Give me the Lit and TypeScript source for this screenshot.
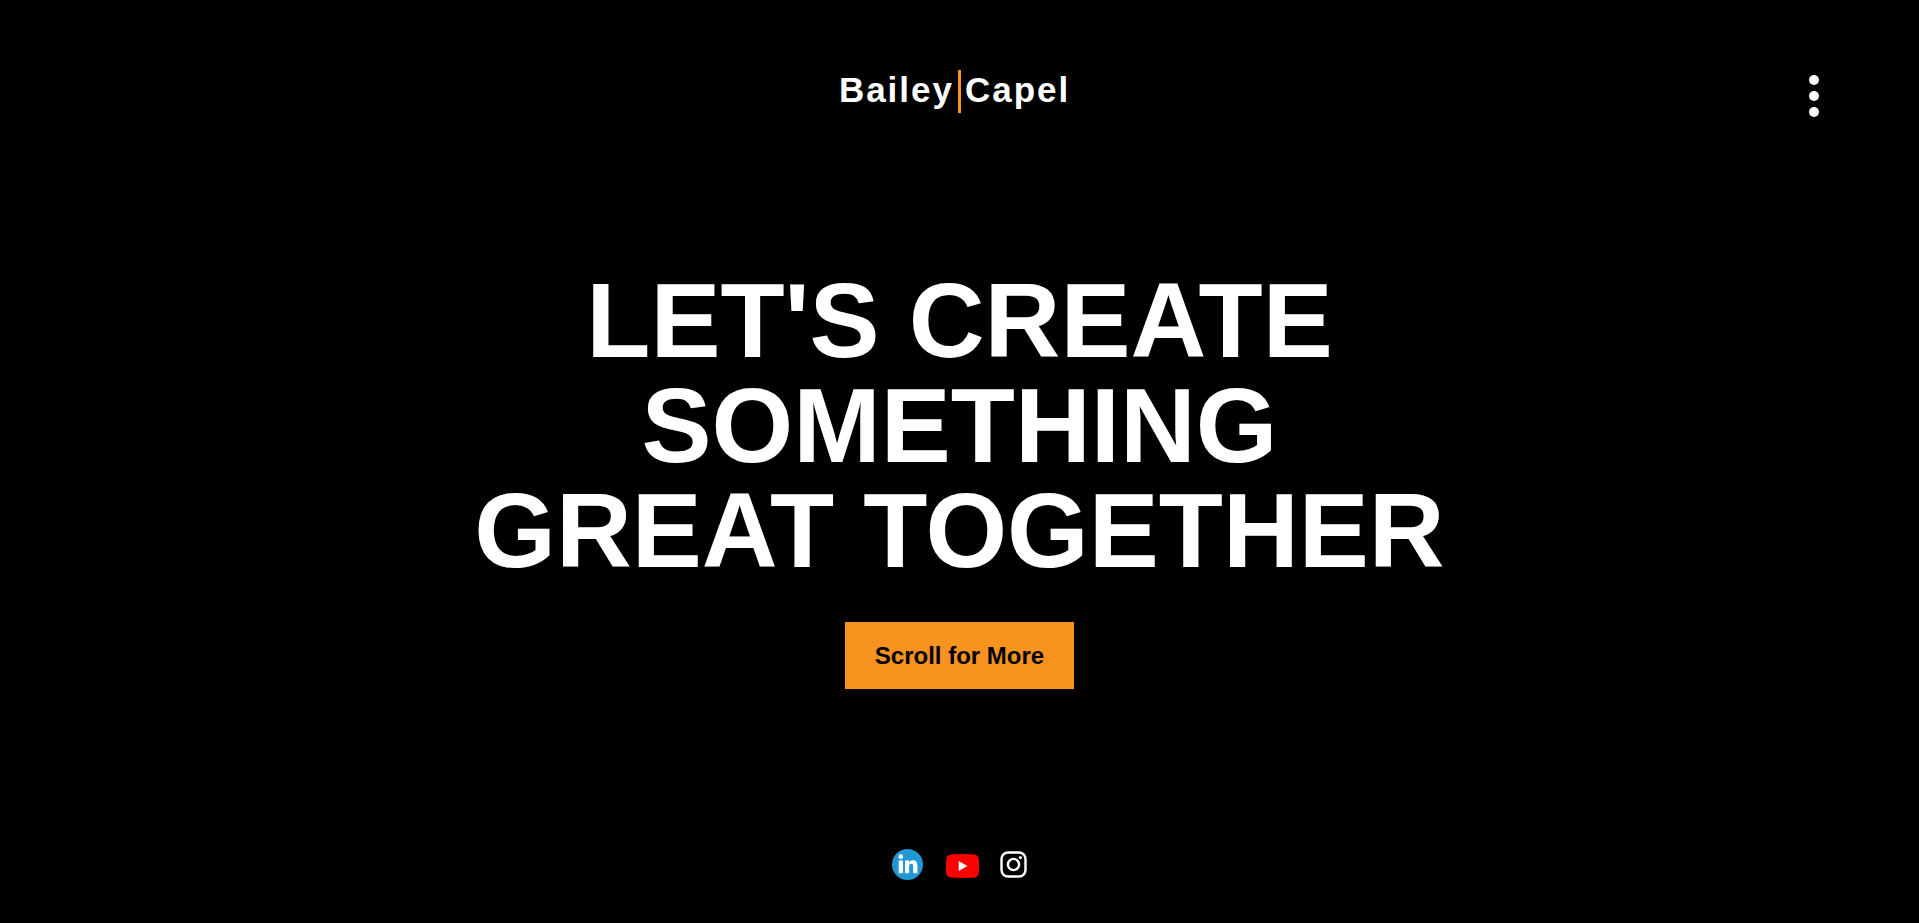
import { LitElement, html, css } from "lit";
import { customElement } from "lit/decorators.js";

@customElement("app-root")
export class AppRoot extends LitElement {
  static styles = css`
    :host {
      display: flex;
      flex-direction: column;
      min-height: 100vh;
      box-sizing: border-box;
      background: #000;
      color: #fff;
      font-family: Arial, "Liberation Sans", sans-serif;
      font-weight: bold;
    }
    a {
      color: inherit;
      text-decoration: none;
    }
    svg {
      display: block;
    }
    .header {
      display: grid;
      grid-template-columns: 1fr auto 1fr;
      align-items: start;
      padding: 70px 100px 0;
    }
    .logo {
      grid-column: 2;
      display: grid;
      grid-template-columns: 1fr 3px 1fr;
      column-gap: 4px;
      font-size: 35px;
      line-height: 40px;
      letter-spacing: 2px;
    }
    .first {
      text-align: right;
    }
    .bar {
      height: 43px;
      background: #f7931e;
    }
    .menu {
      justify-self: end;
      display: grid;
      gap: 6px;
      padding: 5px 0 0;
      border: 0;
      background: none;
      cursor: pointer;
    }
    .dot {
      width: 10px;
      height: 10px;
      border-radius: 50%;
      background: #fff;
    }
    .hero {
      flex: 1;
      display: flex;
      flex-direction: column;
      align-items: center;
      justify-content: center;
      gap: 39px;
    }
    .title {
      margin: 0;
      font-size: 105px;
      line-height: 105px;
      text-align: center;
      text-transform: uppercase;
    }
    .more {
      padding: 20px 30px;
      border: 0;
      background: #f7931e;
      color: #000;
      font: inherit;
      font-size: 24px;
      line-height: 27px;
      cursor: pointer;
    }
    .social {
      display: flex;
      justify-content: center;
      align-items: center;
      gap: 21px;
      padding: 10px 0 43px;
    }
  `;

  render() {
    return html`
      <header class="header">
        <a class="logo" href="#" aria-label="Bailey Capel">
          <span class="first">Bailey</span>
          <span class="bar"></span>
          <span>Capel</span>
        </a>
        <button class="menu" type="button" aria-label="Menu">
          <span class="dot"></span>
          <span class="dot"></span>
          <span class="dot"></span>
        </button>
      </header>
      <main class="hero">
        <h1 class="title">Let's create<br />something<br />great together</h1>
        <button class="more" type="button">Scroll for More</button>
      </main>
      <footer class="social">
        <a href="#" aria-label="LinkedIn">
          <svg width="31" height="31" viewBox="0 0 31 31">
            <circle cx="15.5" cy="15.5" r="15.5" fill="#2298d3" />
            <g fill="#fff">
              <circle cx="8.800" cy="7.700" r="2.400" />
              <path d="M6.700 11.500h4.300v12.700H6.700zM13 11.500h4v1.800c.7-1.200 2-2.100 3.900-2.100 3.700 0 4.500 2.500 4.500 5.700v7.300h-4.200v-6.400c0-1.500 0-3.100-2-3.100s-2.100 1.500-2.100 3v6.500H13z" />
            </g>
          </svg>
        </a>
        <a href="#" aria-label="YouTube">
          <svg width="35" height="28" viewBox="-1 0 35 28">
            <path d="M6 3.400Q17.500 2.600 29 3.400Q33.300 3.700 33.700 8Q34.300 15 33.700 22Q33.300 26.300 29 26.600Q17.500 27.400 6 26.600Q1.700 26.300 1.300 22Q.7 15 1.300 8Q1.700 3.700 6 3.400Z" fill="#f00" />
            <path d="M13.700 10v10l8.700-5z" fill="#fff" />
          </svg>
        </a>
        <a href="#" aria-label="Instagram">
          <svg width="27" height="27" viewBox="0 0 27 27" fill="none" stroke="#fff">
            <rect x="1.500" y="1.500" width="24" height="24" rx="6.500" stroke-width="2.400" />
            <circle cx="13.500" cy="13.500" r="5.600" stroke-width="2.400" />
            <circle cx="20.400" cy="6.600" r="1.600" fill="#fff" stroke="none" />
          </svg>
        </a>
      </footer>
    `;
  }
}
